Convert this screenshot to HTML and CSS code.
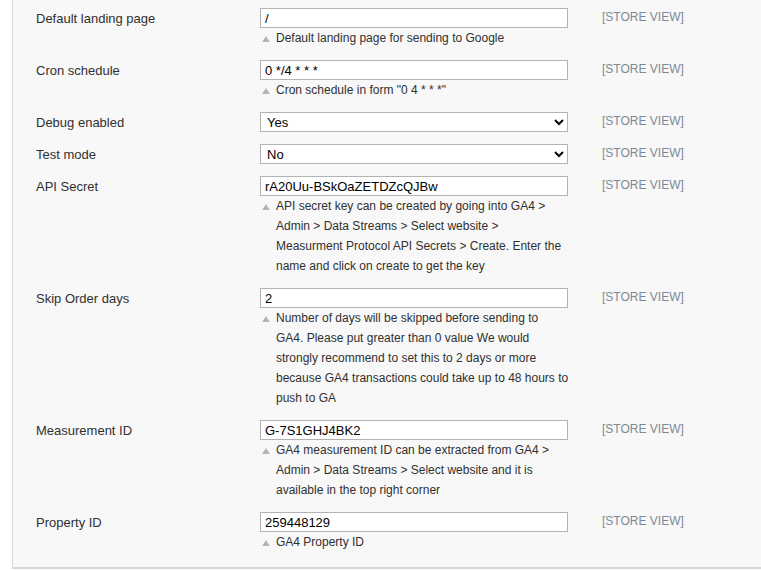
FILE: index.html
```html
<!DOCTYPE html>
<html>
<head>
<meta charset="utf-8">
<link rel="stylesheet" href="styles.css">
</head>
<body>
<div class="panel">
  <div class="row">
    <div class="label">Default landing page</div>
    <div class="value">
      <input class="field" type="text" value="/">
      <div class="hint"><span class="tri"></span><span>Default landing page for sending to Google</span></div>
    </div>
    <div class="scope">[STORE VIEW]</div>
  </div>
  <div class="row">
    <div class="label">Cron schedule</div>
    <div class="value">
      <input class="field" type="text" value="0 */4 * * *">
      <div class="hint"><span class="tri"></span><span>Cron schedule in form "0 4 * * *"</span></div>
    </div>
    <div class="scope">[STORE VIEW]</div>
  </div>
  <div class="row">
    <div class="label">Debug enabled</div>
    <div class="value">
      <select class="field sel"><option>Yes</option><option>No</option></select>
    </div>
    <div class="scope">[STORE VIEW]</div>
  </div>
  <div class="row">
    <div class="label">Test mode</div>
    <div class="value">
      <select class="field sel"><option>No</option><option>Yes</option></select>
    </div>
    <div class="scope">[STORE VIEW]</div>
  </div>
  <div class="row">
    <div class="label">API Secret</div>
    <div class="value">
      <input class="field" type="text" value="rA20Uu-BSkOaZETDZcQJBw">
      <div class="hint"><span class="tri"></span><span>API secret key can be created by going into GA4 &gt;<br>Admin &gt; Data Streams &gt; Select website &gt;<br>Measurment Protocol API Secrets &gt; Create. Enter the<br>name and click on create to get the key</span></div>
    </div>
    <div class="scope">[STORE VIEW]</div>
  </div>
  <div class="row">
    <div class="label">Skip Order days</div>
    <div class="value">
      <input class="field" type="text" value="2">
      <div class="hint"><span class="tri"></span><span>Number of days will be skipped before sending to<br>GA4. Please put greater than 0 value We would<br>strongly recommend to set this to 2 days or more<br>because GA4 transactions could take up to 48 hours to<br>push to GA</span></div>
    </div>
    <div class="scope">[STORE VIEW]</div>
  </div>
  <div class="row">
    <div class="label">Measurement ID</div>
    <div class="value">
      <input class="field" type="text" value="G-7S1GHJ4BK2">
      <div class="hint"><span class="tri"></span><span>GA4 measurement ID can be extracted from GA4 &gt;<br>Admin &gt; Data Streams &gt; Select website and it is<br>available in the top right corner</span></div>
    </div>
    <div class="scope">[STORE VIEW]</div>
  </div>
  <div class="row">
    <div class="label">Property ID</div>
    <div class="value">
      <input class="field" type="text" value="259448129">
      <div class="hint"><span class="tri"></span><span>GA4 Property ID</span></div>
    </div>
    <div class="scope">[STORE VIEW]</div>
  </div>
</div>
</body>
</html>
```
FILE: styles.css
```css
html, body {
  margin: 0;
  padding: 0;
  background: #ffffff;
  overflow: hidden;
}
body {
  font-family: "Liberation Sans", Arial, sans-serif;
  font-size: 12px;
  color: #303030;
}
.panel {
  margin-left: 12px;
  width: 749px;
  height: 569px;
  box-sizing: border-box;
  background: #f8f8f8;
  border-left: 1px solid #d6d6d6;
  border-bottom: 2px solid #d6d6d6;
  padding: 8px 0 0 23px;
}
.row {
  display: grid;
  grid-template-columns: 190px 308px 120px;
  column-gap: 34px;
  margin-bottom: 12px;
}
.label {
  font-size: 13px;
  line-height: 18px;
  height: 20px;
  box-sizing: border-box;
  padding-top: 2px;
}
.value {
  display: flex;
  flex-direction: column;
}
.field {
  box-sizing: border-box;
  width: 308px;
  height: 20px;
  margin: 0;
  border: 1px solid #b3b3b3;
  background: #fff;
  font-family: "Liberation Sans", Arial, sans-serif;
  font-size: 13px;
  color: #000;
  padding: 0 4px;
  outline: none;
}
.sel {
  height: 20px;
  padding: 0 2px;
}
.hint {
  display: flex;
  width: 308px;
  white-space: nowrap;
  font-size: 12px;
  line-height: 20px;
  color: #303030;
  padding-left: 2px;
}
.tri {
  flex: none;
  width: 0;
  height: 0;
  border-left: 4px solid transparent;
  border-right: 4px solid transparent;
  border-bottom: 6px solid #b5b5b5;
  margin: 8px 6px 0 0;
}
.scope {
  font-size: 12px;
  line-height: 16px;
  height: 20px;
  box-sizing: border-box;
  padding-top: 1px;
  color: #7d8a96;
}
```
